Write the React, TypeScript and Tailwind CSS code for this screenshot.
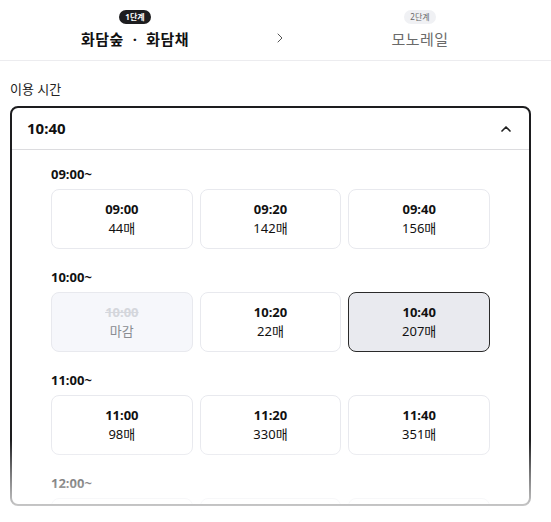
import { ChevronRight, ChevronUp } from "lucide-react"

interface Slot {
  time: string
  count: string
  closed?: boolean
  selected?: boolean
}

const groups: { label: string; slots: Slot[] }[] = [
  {
    label: "09:00~",
    slots: [
      { time: "09:00", count: "44매" },
      { time: "09:20", count: "142매" },
      { time: "09:40", count: "156매" },
    ],
  },
  {
    label: "10:00~",
    slots: [
      { time: "10:00", count: "마감", closed: true },
      { time: "10:20", count: "22매" },
      { time: "10:40", count: "207매", selected: true },
    ],
  },
  {
    label: "11:00~",
    slots: [
      { time: "11:00", count: "98매" },
      { time: "11:20", count: "330매" },
      { time: "11:40", count: "351매" },
    ],
  },
  {
    label: "12:00~",
    slots: [
      { time: "12:00", count: "412매" },
      { time: "12:20", count: "380매" },
      { time: "12:40", count: "402매" },
    ],
  },
]

function SlotCard({ time, count, closed, selected }: Slot) {
  let cls = "border-[#e8e9ee] bg-white"
  if (closed) cls = "border-[#e8e9ee] bg-[#f6f7fb]"
  if (selected) cls = "border-[#2a2a2a] bg-[#e9eaef]"
  return (
    <div
      className={`flex h-[60px] flex-col items-center justify-center rounded-lg border ${cls}`}
    >
      <span
        className={`text-[13px] font-bold leading-[19px] ${
          closed ? "text-[#d4d6dc] line-through" : "text-[#111]"
        }`}
      >
        {time}
      </span>
      <span
        className={`text-[13px] leading-[19px] ${
          closed ? "text-[#8a8c92]" : "text-[#111]"
        }`}
      >
        {count}
      </span>
    </div>
  )
}

export default function App() {
  return (
    <div
      className="h-[522px] w-[551px] overflow-hidden bg-white text-[#111]"
      style={{ fontFamily: '"Noto Sans", "Noto Sans CJK KR", sans-serif' }}
    >
      <div className="grid h-[61px] grid-cols-[270px_1fr_262px] border-b border-[#ececef]">
        <div className="flex flex-col items-center pt-[10px]">
          <span className="flex h-[14px] items-center rounded-full bg-[#1d1d1f] px-[6px] text-[8px] font-bold leading-none text-white">
            1단계
          </span>
          <span className="mt-[4px] whitespace-pre text-[15px] font-bold leading-[22px] tracking-[0.5px]">
            화담숲  ·  화담채
          </span>
        </div>
        <div className="flex items-center justify-center pt-[15px]">
          <ChevronRight className="h-[16px] w-[16px] shrink-0 text-[#555]" strokeWidth={1.5} />
        </div>
        <div className="flex flex-col items-center pt-[10px]">
          <span className="flex h-[14px] items-center rounded-full bg-[#f0f1f4] px-[6px] text-[8px] leading-none text-[#666]">
            2단계
          </span>
          <span className="mt-[4px] text-[15px] leading-[22px] tracking-[0.5px] text-[#6a6a6a]">
            모노레일
          </span>
        </div>
      </div>

      <div className="pl-[10px]">
        <div className="pt-[18px] text-[13px] leading-[20px] text-[#222]">이용 시간</div>

        <div className="relative mt-[7px] w-[521px]">
          <div className="h-[400px] overflow-hidden rounded-lg border-2 border-[#1d1d1f]">
            <div className="flex h-[42px] items-center justify-between border-b border-[#dcdcdf] pl-[15px] pr-[15px]">
              <span className="text-[15px] font-bold">10:40</span>
              <ChevronUp className="h-[16px] w-[16px] text-[#222]" strokeWidth={2.5} />
            </div>
            <div className="flex flex-col gap-[20px] px-[39px] pt-[16px]">
              {groups.map((g) => (
                <div key={g.label}>
                  <div className="mb-[6px] text-[13px] font-bold leading-[17px]">{g.label}</div>
                  <div className="grid grid-cols-3 gap-[7px]">
                    {g.slots.map((s) => (
                      <SlotCard key={s.time} {...s} />
                    ))}
                  </div>
                </div>
              ))}
            </div>
          </div>
          <div className="pointer-events-none absolute inset-x-0 bottom-0 h-[66px] bg-gradient-to-b from-white/0 via-white/40 to-white/75" />
        </div>
      </div>
    </div>
  )
}
